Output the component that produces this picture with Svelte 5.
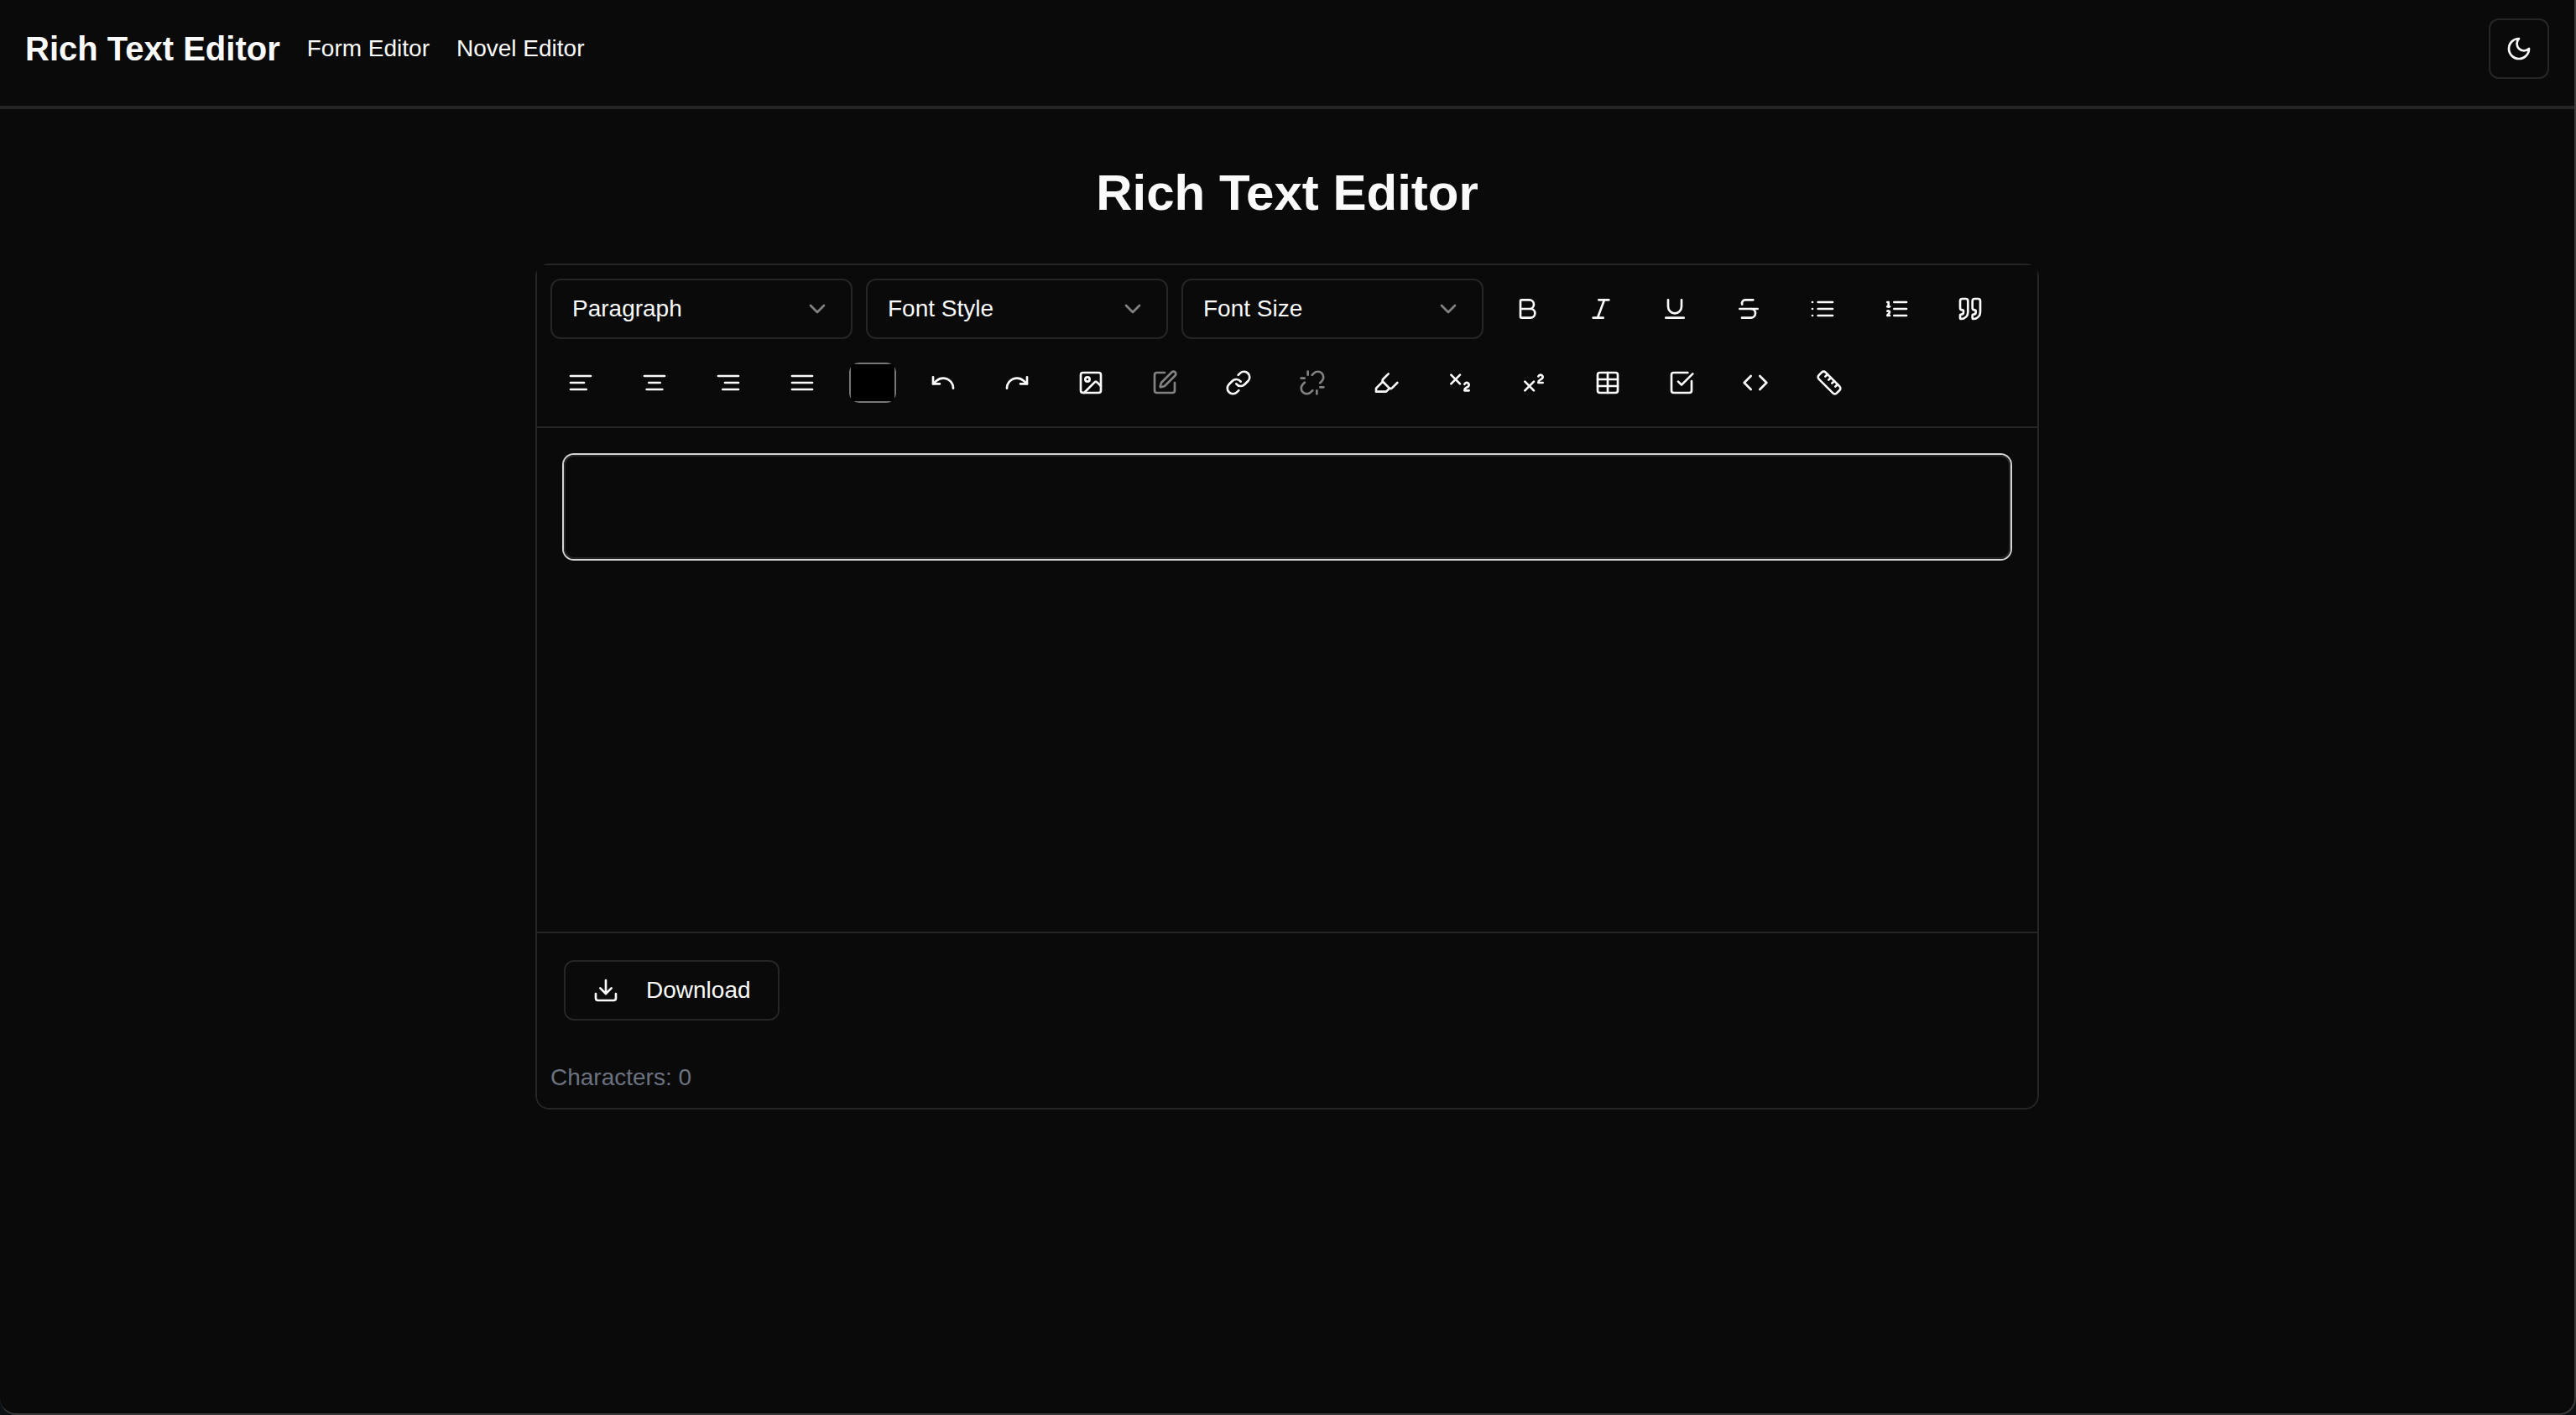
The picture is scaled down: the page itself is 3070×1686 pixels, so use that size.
<script lang="ts">
  type Tool = { label: string; paths: string[]; disabled?: boolean };

  const selects = [
    { label: 'Block type', options: ['Paragraph', 'Heading 1', 'Heading 2', 'Heading 3'] },
    { label: 'Font family', options: ['Font Style', 'Sans', 'Serif', 'Mono'] },
    { label: 'Text size', options: ['Font Size', 'Small', 'Normal', 'Large'] },
  ];

  const formatting: Tool[] = [
    { label: 'Bold', paths: ['M6 12h9a4 4 0 0 1 0 8H7a1 1 0 0 1-1-1V5a1 1 0 0 1 1-1h7a4 4 0 0 1 0 8'] },
    { label: 'Italic', paths: ['M19 4h-9', 'M14 20H5', 'M15 4 9 20'] },
    { label: 'Underline', paths: ['M6 4v6a6 6 0 0 0 12 0V4', 'M4 20h16'] },
    { label: 'Strikethrough', paths: ['M16 4H9a3 3 0 0 0-2.83 4', 'M14 12a4 4 0 0 1 0 8H6', 'M4 12h16'] },
    { label: 'Bullet list', paths: ['M3 6h.01', 'M3 12h.01', 'M3 18h.01', 'M8 6h13', 'M8 12h13', 'M8 18h13'] },
    { label: 'Numbered list', paths: ['M10 6h11', 'M10 12h11', 'M10 18h11', 'M4 6h1v4', 'M4 10h2', 'M6 18H4c0-1 2-2 2-3s-1-1.5-2-1'] },
    {
      label: 'Quote',
      paths: [
        'M16 3a2 2 0 0 0-2 2v6a2 2 0 0 0 2 2 1 1 0 0 1 1 1v1a2 2 0 0 1-2 2 1 1 0 0 0-1 1v2a1 1 0 0 0 1 1 6 6 0 0 0 6-6V5a2 2 0 0 0-2-2z',
        'M5 3a2 2 0 0 0-2 2v6a2 2 0 0 0 2 2 1 1 0 0 1 1 1v1a2 2 0 0 1-2 2 1 1 0 0 0-1 1v2a1 1 0 0 0 1 1 6 6 0 0 0 6-6V5a2 2 0 0 0-2-2z',
      ],
    },
    { label: 'Align left', paths: ['M21 6H3', 'M15 12H3', 'M17 18H3'] },
    { label: 'Align center', paths: ['M21 6H3', 'M17 12H7', 'M19 18H5'] },
    { label: 'Align right', paths: ['M21 6H3', 'M21 12H9', 'M21 18H7'] },
    { label: 'Justify', paths: ['M3 6h18', 'M3 12h18', 'M3 18h18'] },
  ];

  const inserting: Tool[] = [
    { label: 'Undo', paths: ['M3 7v6h6', 'M21 17a9 9 0 0 0-9-9 9 9 0 0 0-6 2.3L3 13'] },
    { label: 'Redo', paths: ['M21 7v6h-6', 'M3 17a9 9 0 0 1 9-9 9 9 0 0 1 6 2.3l3 2.7'] },
    {
      label: 'Image',
      paths: [
        'M5 3h14a2 2 0 0 1 2 2v14a2 2 0 0 1-2 2H5a2 2 0 0 1-2-2V5a2 2 0 0 1 2-2z',
        'M11 9a2 2 0 1 1-4 0 2 2 0 0 1 4 0z',
        'm21 15-3.086-3.086a2 2 0 0 0-2.828 0L6 21',
      ],
    },
    {
      label: 'Edit image',
      disabled: true,
      paths: [
        'M12 3H5a2 2 0 0 0-2 2v14a2 2 0 0 0 2 2h14a2 2 0 0 0 2-2v-7',
        'M18.375 2.625a1 1 0 0 1 3 3l-9.013 9.014a2 2 0 0 1-.853.505l-2.873.84a.5.5 0 0 1-.62-.62l.84-2.873a2 2 0 0 1 .506-.852z',
      ],
    },
    {
      label: 'Link',
      paths: [
        'M10 13a5 5 0 0 0 7.54.54l3-3a5 5 0 0 0-7.07-7.07l-1.72 1.71',
        'M14 11a5 5 0 0 0-7.54-.54l-3 3a5 5 0 0 0 7.07 7.07l1.71-1.71',
      ],
    },
    {
      label: 'Unlink',
      disabled: true,
      paths: [
        'm18.84 12.25 1.72-1.71h-.02a5.004 5.004 0 0 0-.12-7.07 5.006 5.006 0 0 0-6.95 0l-1.72 1.71',
        'm5.17 11.75-1.71 1.71a5.004 5.004 0 0 0 .12 7.07 5.006 5.006 0 0 0 6.95 0l1.71-1.71',
        'M8 2v3', 'M2 8h3', 'M16 19v3', 'M19 16h3',
      ],
    },
    { label: 'Highlight', paths: ['m9 11-6 6v3h9l3-3', 'm22 12-4.6 4.6a2 2 0 0 1-2.8 0l-5.2-5.2a2 2 0 0 1 0-2.8L14 4'] },
    {
      label: 'Subscript',
      paths: ['m4 5 8 8', 'm12 5-8 8', 'M20 19h-4c0-1.5.44-2 1.5-2.5S20 15.33 20 14c0-.47-.17-.93-.48-1.29a2.11 2.11 0 0 0-2.62-.44c-.42.24-.74.62-.9 1.07'],
    },
    {
      label: 'Superscript',
      paths: ['m4 19 8-8', 'm12 19-8-8', 'M20 12h-4c0-1.5.442-2 1.5-2.5S20 8.334 20 7.002c0-.472-.17-.93-.484-1.29a2.105 2.105 0 0 0-2.617-.436c-.42.239-.738.614-.899 1.06'],
    },
    {
      label: 'Table',
      paths: ['M5 3h14a2 2 0 0 1 2 2v14a2 2 0 0 1-2 2H5a2 2 0 0 1-2-2V5a2 2 0 0 1 2-2z', 'M12 3v18', 'M3 9h18', 'M3 15h18'],
    },
    { label: 'Task list', paths: ['M21 10.5V19a2 2 0 0 1-2 2H5a2 2 0 0 1-2-2V5a2 2 0 0 1 2-2h12.5', 'm9 11 3 3L22 4'] },
    { label: 'Code', paths: ['m16 18 6-6-6-6', 'm8 6-6 6 6 6'] },
    {
      label: 'Horizontal rule',
      paths: [
        'M21.3 15.3a2.4 2.4 0 0 1 0 3.4l-2.6 2.6a2.4 2.4 0 0 1-3.4 0L2.7 8.7a2.41 2.41 0 0 1 0-3.4l2.6-2.6a2.41 2.41 0 0 1 3.4 0Z',
        'm14.5 12.5 2-2', 'm11.5 9.5 2-2', 'm8.5 6.5 2-2', 'm17.5 15.5 2-2',
      ],
    },
  ];

  let content = $state('');
  let color = $state('#000000');
</script>

{#snippet icon(paths: string[])}
  <svg class="icon" viewBox="0 0 24 24" aria-hidden="true">
    {#each paths as d}<path {d} />{/each}
  </svg>
{/snippet}

{#snippet toolButton(tool: Tool)}
  <button class="tool" type="button" aria-label={tool.label} disabled={tool.disabled}>
    {@render icon(tool.paths)}
  </button>
{/snippet}

<div class="window">
  <header>
    <nav>
      <a class="brand" href="#home">Rich Text Editor</a>
      <a href="#form">Form Editor</a>
      <a href="#novel">Novel Editor</a>
    </nav>
    <button class="outlined theme" type="button" aria-label="Toggle theme">
      {@render icon(['M12 3a6 6 0 0 0 9 9 9 9 0 1 1-9-9Z'])}
    </button>
  </header>

  <main>
    <h1>Rich Text Editor</h1>
    <div class="clip">
      <section class="card" aria-label="Editor">
        <div class="toolbar" role="toolbar" aria-label="Formatting">
          {#each selects as select}
            <div class="picker">
              <select class="outlined" aria-label={select.label}>
                {#each select.options as option}<option>{option}</option>{/each}
              </select>
              {@render icon(['m6 9 6 6 6-6'])}
            </div>
          {/each}
          {#each formatting as tool}{@render toolButton(tool)}{/each}
          <input class="swatch" type="color" aria-label="Text color" bind:value={color} />
          {#each inserting as tool}{@render toolButton(tool)}{/each}
        </div>

        <div class="content">
          <textarea aria-label="Document text" bind:value={content}></textarea>
        </div>

        <div class="actions">
          <button class="outlined download" type="button">
            {@render icon(['M21 15v4a2 2 0 0 1-2 2H5a2 2 0 0 1-2-2v-4', 'm7 10 5 5 5-5', 'M12 15V3'])}
            Download
          </button>
        </div>
        <p class="count">Characters: {content.length}</p>
      </section>
    </div>
  </main>
</div>

<style>
  :global(body) {
    margin: 0;
    background: #0d1114;
  }

  .window,
  .window * {
    box-sizing: border-box;
  }

  .window {
    min-height: 100vh;
    border: 0 solid #3a3a3a;
    border-width: 0 2px 2px 0;
    border-radius: 0 0 20px 20px;
    background: #0a0a0a;
    color: #fafafa;
    font: 28px/40px 'Liberation Sans', Arial, sans-serif;
  }

  header {
    display: flex;
    align-items: center;
    justify-content: space-between;
    padding: 22px 30px 32px;
    border-bottom: 4px solid #262626;
  }

  nav {
    display: flex;
    align-items: center;
    gap: 32px;
  }

  a {
    color: inherit;
    text-decoration: none;
  }

  .brand {
    font-size: 40px;
    font-weight: 700;
    line-height: 56px;
  }

  button,
  select {
    height: 72px;
    border: 0;
    border-radius: 12px;
    background: transparent;
    color: inherit;
    font: inherit;
  }

  .outlined {
    border: 2px solid #262626;
  }

  .icon {
    display: block;
    width: 32px;
    height: 32px;
    flex: none;
    fill: none;
    stroke: currentColor;
    stroke-width: 2;
    stroke-linecap: round;
    stroke-linejoin: round;
  }

  .tool,
  .theme {
    display: flex;
    align-items: center;
    justify-content: center;
    width: 72px;
    padding: 0;
  }

  .tool:disabled {
    opacity: 0.5;
  }

  main {
    padding: 64px 32px;
  }

  h1 {
    margin: 0 0 48px;
    font-size: 60px;
    line-height: 72px;
    text-align: center;
  }

  .clip {
    max-width: 1792px;
    margin: 0 auto;
    border-radius: 16px;
    overflow: hidden;
  }

  .card {
    border: 2px solid #262626;
    border-radius: 0 0 16px 16px;
  }

  .toolbar {
    display: flex;
    flex-wrap: wrap;
    align-items: center;
    gap: 16px;
    padding: 16px;
    border-bottom: 2px solid #262626;
  }

  .picker {
    display: grid;
    align-items: center;
    width: 360px;
  }

  .picker > :global(*) {
    grid-area: 1 / 1;
  }

  .picker select {
    width: 100%;
    padding: 0 72px 0 24px;
    appearance: none;
  }

  .picker option {
    background: #0a0a0a;
  }

  .picker .icon {
    justify-self: end;
    margin-right: 26px;
    opacity: 0.5;
    pointer-events: none;
  }

  .swatch {
    width: 56px;
    height: 48px;
    margin: 0 4px;
    padding: 0;
    border: 0;
    background: #000;
    appearance: none;
    clip-path: inset(0 round 12px);
  }

  .swatch::-webkit-color-swatch-wrapper {
    padding: 0;
  }

  .swatch::-webkit-color-swatch {
    border: 2px solid #777;
    border-radius: 0;
  }

  .content {
    min-height: 600px;
    padding: 32px;
  }

  textarea {
    display: block;
    width: 100%;
    height: 124px;
    padding: 16px 24px;
    border: 2px solid #262626;
    border-radius: 12px;
    outline: 0;
    background: transparent;
    box-shadow: 0 0 0 2px #d4d4d4;
    color: inherit;
    font: inherit;
    resize: none;
  }

  .actions {
    padding: 32px;
    border-top: 2px solid #262626;
  }

  .download {
    display: flex;
    align-items: center;
    gap: 32px;
    padding: 0 32px;
  }

  .count {
    margin: 0;
    padding: 16px;
    color: #6b7280;
  }
</style>
